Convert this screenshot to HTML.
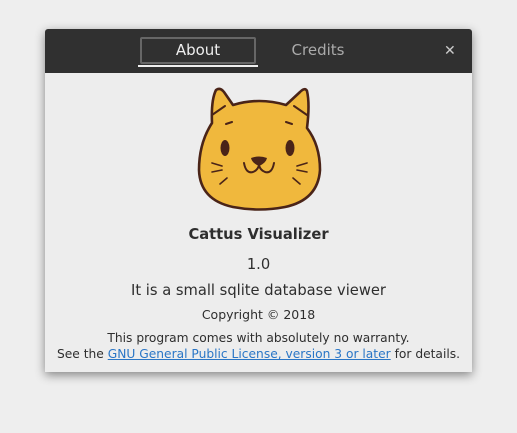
<!DOCTYPE html>
<html><head><meta charset="utf-8"><style>
body{margin:0;width:517px;height:433px;background:#eeeeee;font-family:"DejaVu Sans","Liberation Sans",sans-serif;overflow:hidden;position:relative}
.win{position:absolute;left:45px;top:29px;width:427px;height:343px;background:#ededed;box-shadow:0 3px 10px rgba(0,0,0,.45);border-radius:3px 3px 0 0;overflow:hidden}
.hdr{position:absolute;left:0;top:0;width:427px;height:44px;background:#303030}
.tab{position:absolute;left:95px;top:8px;width:112px;height:23px;border:2px solid #666;border-radius:2px;color:#eee;font-size:15px;text-align:center;line-height:23px}
.ul{position:absolute;left:93px;top:36px;width:120px;height:2px;background:#eee}
.cr{position:absolute;left:230px;top:11px;width:86px;text-align:center;color:#aaa;font-size:15px;line-height:20px}
.x{position:absolute;left:399px;top:14px;color:#ccc;font-size:14px;font-weight:bold}
.t{position:absolute;left:0;width:427px;text-align:center;color:#2e2e2e;white-space:nowrap}
a{color:#2a76c6;text-decoration:underline}
</style></head><body>
<div class="win">
<div class="hdr"><div class="tab">About</div><div class="ul"></div><div class="cr">Credits</div><div class="x">✕</div></div>
<svg style="position:absolute;left:0;top:0" width="427" height="200" viewBox="45 29 427 200">
<g stroke="#4a2418" stroke-width="2.6" fill="#f0b83d" stroke-linejoin="round" stroke-linecap="round">
<path d="M212 123 Q211 100 216 90 Q220 87 224 92 L233 105 Q259 97 286 105 L300 92 Q305 87 307 91 Q310 104 307 128 Q320 145 320 170 Q318 200 285 207 Q259 212 233 207 Q200 200 199 170 Q199 143 212 123 Z"/>
<path d="M212 115 L225 106 M307 115 L294 106 M226 124 L232 122 M286 122 L292 124" fill="none" stroke-width="2"/>
<path d="M212 163 L222 166 M212 172 L222 170 M220 184 L227 178 M307 163 L297 166 M307 172 L297 170 M300 184 L293 178" fill="none" stroke-width="1.6"/>
<path d="M244 163 Q246 174 253 172 Q258 170 259 165 Q260 170 265 172 Q272 174 274 163" fill="none" stroke-width="2"/>
</g>
<g fill="#4a2418"><ellipse cx="225" cy="148" rx="4.5" ry="8"/><ellipse cx="290" cy="148" rx="4.5" ry="8"/><path d="M251 158 Q259 155 267 158 Q266 163 259 166 Q252 163 251 158Z"/></g>
</svg>
<div class="t" style="top:197px;font-size:14.7px;font-weight:bold">Cattus Visualizer</div>
<div class="t" style="top:227px;font-size:14.7px">1.0</div>
<div class="t" style="top:253px;font-size:14.7px">It is a small sqlite database viewer</div>
<div class="t" style="top:278px;font-size:12.5px">Copyright © 2018</div>
<div class="t" style="top:301px;font-size:12.25px;line-height:16px">This program comes with absolutely no warranty.<br>See the <a>GNU General Public License, version 3 or later</a> for details.</div>
</div>
</body></html>
